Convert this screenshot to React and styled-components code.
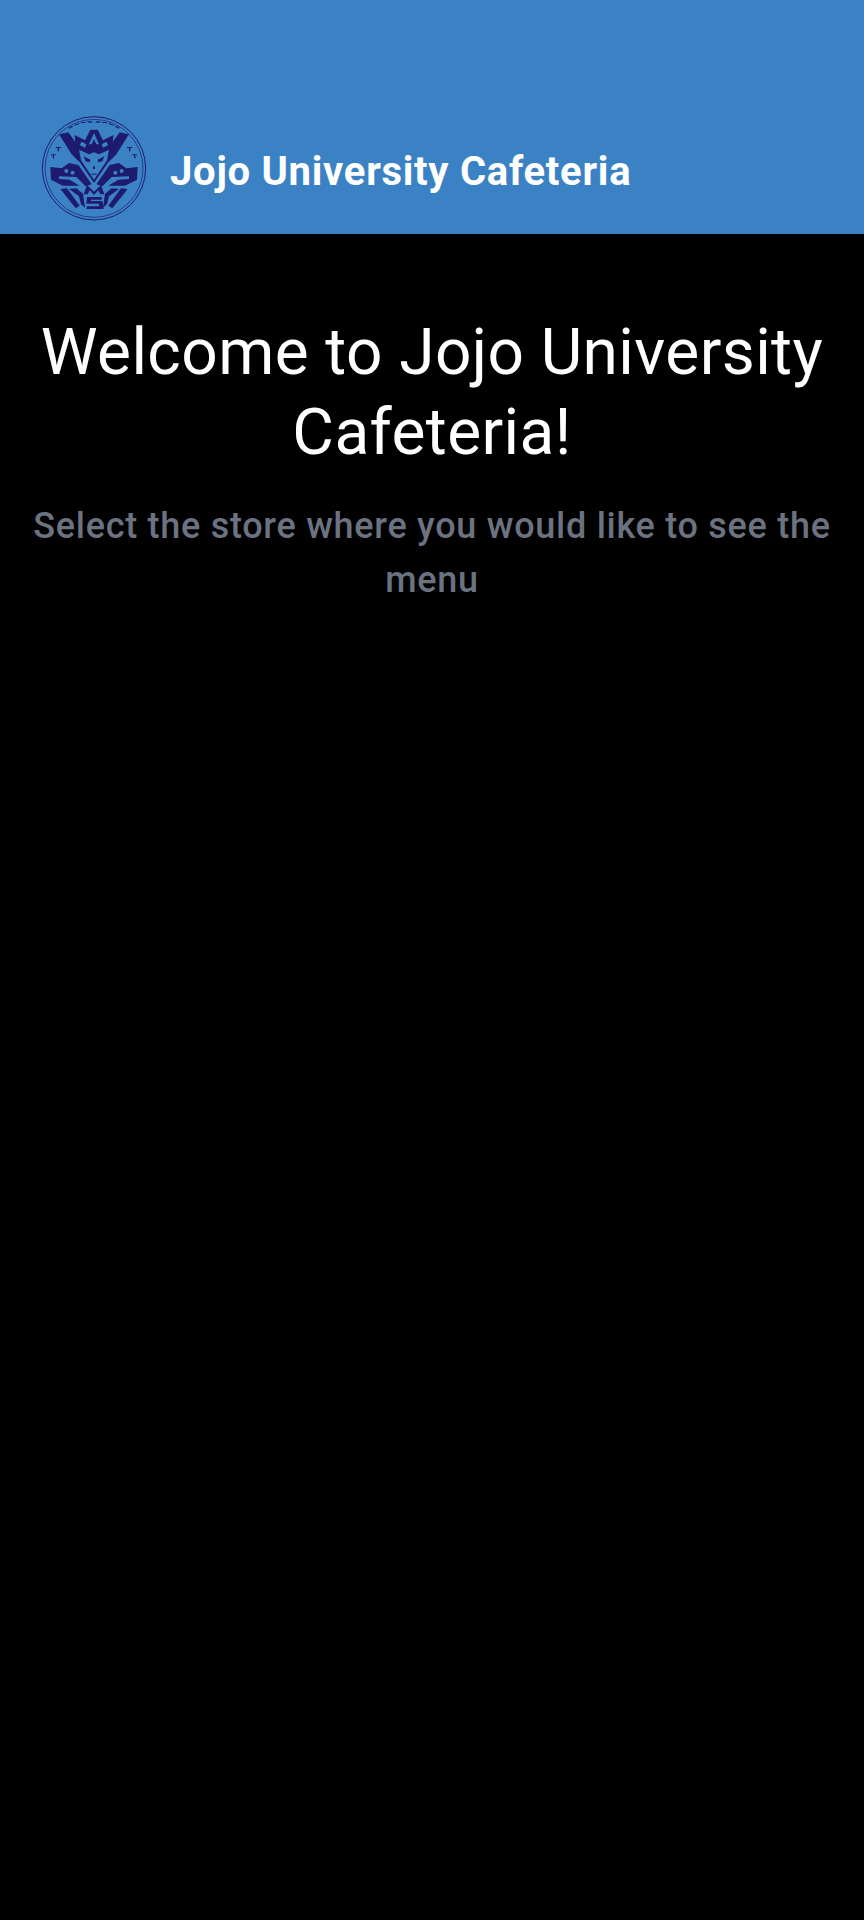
import React from "react";
import styled, { createGlobalStyle } from "styled-components";

const GlobalStyle = createGlobalStyle`
  html, body {
    margin: 0;
    padding: 0;
    background-color: #000;
  }
  body {
    font-family: Roboto, "Liberation Sans", sans-serif;
  }
`;

const Page = styled.div`
  min-height: 1920px;
  background-color: #000;
`;

const Header = styled.header`
  height: 234px;
  box-sizing: border-box;
  padding: 0 0 12px 40px;
  display: flex;
  align-items: flex-end;
  gap: 22px;
  background-color: #3b82c4;
`;

const Logo = styled.svg`
  width: 108px;
  height: 108px;
  flex-shrink: 0;
`;

const Title = styled.h1`
  margin: 0 0 26px;
  font-size: 40px;
  line-height: 48px;
  font-weight: 700;
  letter-spacing: 0.73px;
  color: #fff;
`;

const Main = styled.main`
  padding: 79px 24px 0;
  text-align: center;
`;

const Heading = styled.h2`
  margin: 0;
  font-size: 64px;
  line-height: 80px;
  font-weight: 400;
  letter-spacing: 0.4px;
  color: #fff;
`;

const Subtitle = styled.p`
  margin: 26px 0 0;
  font-size: 36px;
  line-height: 54px;
  font-weight: 500;
  letter-spacing: 0.72px;
  color: #6b7280;
`;

const INK = "#1e1a6e";
const BG = "#3b82c4";

// 徽标左半边，右半边用镜像
function LogoHalf({ mirror }) {
  return (
    <g transform={mirror ? "translate(386,0) scale(-1,1)" : undefined}>
      <g fill={INK}>
        <path d="M88 86 L116 80 L152 130 L148 168 L126 146 Z" />
        <path d="M62 184 L96 188 L118 172 L146 178 L186 236 L168 242 L140 214 L88 212 L88 220 L120 222 L150 240 L100 240 L64 222 Z" />
        <path d="M92 250 L112 248 L150 300 L138 308 Z" />
        <path d="M118 250 L140 248 L160 264 L166 306 L154 296 L148 272 Z" />
        <path d="M78 124 h16 v3 h-6 v10 h-4 v-10 h-6 Z" />
        <path d="M64 146 h14 v3 h-5 v9 h-4 v-9 h-5 Z" />
        <path d="M116 66 l12 -6 l2 3 l-12 6 Z" />
        <path d="M134 57 l14 -5 l1 3 l-14 5 Z" />
        <path d="M154 50 l14 -2 l1 3 l-14 2 Z" />
        <path d="M174 47 h14 v4 h-14 Z" />
      </g>
      <g fill={BG}>
        <circle cx="110" cy="196" r="6" />
        <circle cx="129" cy="201" r="6" />
      </g>
    </g>
  );
}

function JojoLogo() {
  return (
    <Logo viewBox="31 25 324 324" aria-label="logo">
      <circle cx="193" cy="188" r="155" fill="none" stroke={INK} strokeWidth="3" />
      <circle cx="193" cy="188" r="147" fill="none" stroke={INK} strokeWidth="2" />
      <LogoHalf />
      <LogoHalf mirror />
      <path
        fill={INK}
        d="M135 88 L166 104 L182 72 L204 72 L220 104 L251 88 L248 128 L238 166 L193 232 L148 166 L138 128 Z"
      />
      <path
        fill={BG}
        d="M148 132 L178 146 L193 140 L208 146 L238 132 L232 164 L193 222 L154 164 Z"
      />
      <path fill={BG} d="M193 82 L208 116 L200 116 L193 100 L186 116 L178 116 Z" />
      <path fill={BG} d="M156 108 L170 116 L166 126 L150 118 Z" />
      <path fill={BG} d="M230 108 L216 116 L220 126 L236 118 Z" />
      <g fill={INK}>
        <path d="M162 152 L182 162 L180 170 L168 167 Z" />
        <path d="M224 152 L204 162 L206 170 L218 167 Z" />
        <rect x="190" y="182" width="6" height="8" />
        <rect x="185" y="204" width="16" height="3" />
        <path d="M172 238 L193 258 L214 238 L224 266 L212 266 L206 254 L193 268 L180 254 L174 266 L162 266 Z" />
        <path d="M172 274 H216 V282 H184 V286 H218 L222 310 H170 L172 302 H208 V294 H170 Z" />
      </g>
    </Logo>
  );
}

export default function App() {
  return (
    <>
      <GlobalStyle />
      <Page>
        <Header>
          <JojoLogo />
          <Title>Jojo University Cafeteria</Title>
        </Header>
        <Main>
          <Heading>Welcome to Jojo University Cafeteria!</Heading>
          <Subtitle>Select the store where you would like to see the menu</Subtitle>
        </Main>
      </Page>
    </>
  );
}
